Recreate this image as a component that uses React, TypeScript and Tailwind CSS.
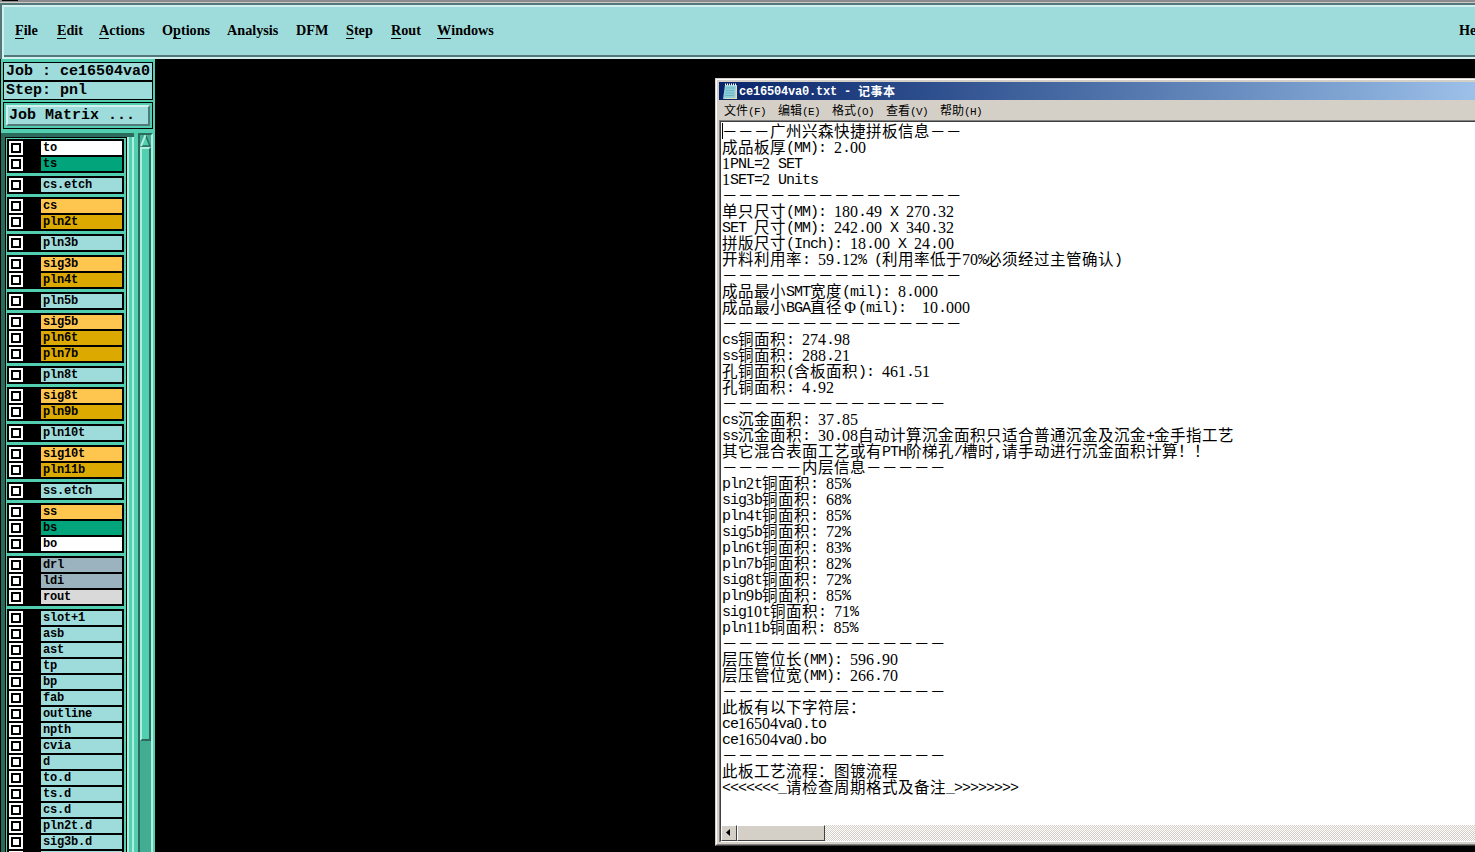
const menuItems = [
  { before: '', key: 'F', after: 'ile', width: 'w-[42px]' },
  { before: '', key: 'E', after: 'dit', width: 'w-[42px]' },
  { before: '', key: 'A', after: 'ctions', width: 'w-[63px]' },
  { before: 'O', key: 'p', after: 'tions', width: 'w-[65px]' },
  { before: 'Analysis', key: '', after: '', width: 'w-[69px]' },
  { before: 'DFM', key: '', after: '', width: 'w-[50px]' },
  { before: '', key: 'S', after: 'tep', width: 'w-[45px]' },
  { before: '', key: 'R', after: 'out', width: 'w-[46px]' },
  { before: '', key: 'W', after: 'indows', width: 'w-[70px]' },
];

const colors = {
  white: 'bg-white',
  green: 'bg-[#02a47c]',
  aqua: 'bg-[#9edcdc]',
  yellow: 'bg-[#ffc64f]',
  gold: 'bg-[#dba900]',
  slate: 'bg-[#9bb3bf]',
  gray: 'bg-[#d9d9d9]',
};

type Layer = [string, keyof typeof colors];

const layerGroups: Layer[][] = [
  [['to', 'white'], ['ts', 'green']],
  [['cs.etch', 'aqua']],
  [['cs', 'yellow'], ['pln2t', 'gold']],
  [['pln3b', 'aqua']],
  [['sig3b', 'yellow'], ['pln4t', 'gold']],
  [['pln5b', 'aqua']],
  [['sig5b', 'yellow'], ['pln6t', 'gold'], ['pln7b', 'gold']],
  [['pln8t', 'aqua']],
  [['sig8t', 'yellow'], ['pln9b', 'gold']],
  [['pln10t', 'aqua']],
  [['sig10t', 'yellow'], ['pln11b', 'gold']],
  [['ss.etch', 'aqua']],
  [['ss', 'yellow'], ['bs', 'green'], ['bo', 'white']],
  [['drl', 'slate'], ['ldi', 'slate'], ['rout', 'gray']],
  [
    ['slot+1', 'aqua'], ['asb', 'aqua'], ['ast', 'aqua'], ['tp', 'aqua'], ['bp', 'aqua'],
    ['fab', 'aqua'], ['outline', 'aqua'], ['npth', 'aqua'], ['cvia', 'aqua'], ['d', 'aqua'],
    ['to.d', 'aqua'], ['ts.d', 'aqua'], ['cs.d', 'aqua'], ['pln2t.d', 'aqua'], ['sig3b.d', 'aqua'],
    ['', 'aqua'],
  ],
];

const notepadMenu = [
  ['文件', '(F)'],
  ['编辑', '(E)'],
  ['格式', '(O)'],
  ['查看', '(V)'],
  ['帮助', '(H)'],
];

const rule15 = '－'.repeat(15);
const rule14 = '－'.repeat(14);

const lines = [
  '－－－广州兴森快捷拼板信息－－',
  '成品板厚(MM): 2.00',
  '1PNL=2 SET',
  '1SET=2 Units',
  rule15,
  '单只尺寸(MM): 180.49 X 270.32',
  'SET 尺寸(MM): 242.00 X 340.32',
  '拼版尺寸(Inch): 18.00 X 24.00',
  '开料利用率: 59.12% (利用率低于70%必须经过主管确认)',
  rule15,
  '成品最小SMT宽度(mil): 8.000',
  '成品最小BGA直径Φ(mil):  10.000',
  rule15,
  'cs铜面积: 274.98',
  'ss铜面积: 288.21',
  '孔铜面积(含板面积): 461.51',
  '孔铜面积: 4.92',
  rule14,
  'cs沉金面积: 37.85',
  'ss沉金面积: 30.08自动计算沉金面积只适合普通沉金及沉金+金手指工艺',
  '其它混合表面工艺或有PTH阶梯孔/槽时,请手动进行沉金面积计算！！',
  '－－－－－内层信息－－－－－',
  'pln2t铜面积: 85%',
  'sig3b铜面积: 68%',
  'pln4t铜面积: 85%',
  'sig5b铜面积: 72%',
  'pln6t铜面积: 83%',
  'pln7b铜面积: 82%',
  'sig8t铜面积: 72%',
  'pln9b铜面积: 85%',
  'sig10t铜面积: 71%',
  'pln11b铜面积: 85%',
  rule14,
  '层压管位长(MM): 596.90',
  '层压管位宽(MM): 266.70',
  rule14,
  '此板有以下字符层：',
  'ce16504va0.to',
  'ce16504va0.bo',
  rule14,
  '此板工艺流程：图镀流程',
  '<<<<<<<_请检查周期格式及备注_>>>>>>>>',
];

// Half-width characters take 8px, full-width ones 16px
const TextLine = ({ text }: { text: string }) => (
  <div className="h-4 flex whitespace-pre leading-4">
    {text.split(/([0-9]+|Φ|[\x20-\x2f\x3a-\x7e]+)/).filter(Boolean).map((part, i) => {
      if (/^[0-9]/.test(part)) {
        return <span key={i} className="font-['Liberation_Serif',serif] text-[16px] leading-[18px]">{part}</span>;
      }
      if (part === 'Φ') {
        return <span key={i} className="w-4 text-center font-['Liberation_Serif',serif] text-[16px] leading-[18px]">{part}</span>;
      }
      if (/^[\x20-\x7e]/.test(part)) {
        return <span key={i} className="font-['Liberation_Mono',monospace] text-[15px] leading-[19px] tracking-[-1.002px]">{part}</span>;
      }
      return <span key={i} className="leading-[15px] tracking-[0.5px]">{part}</span>;
    })}
  </div>
);

const MenuBar = () => (
  <div className="h-[59px] shrink-0 bg-[#52787a]">
    <div className="h-[2px] bg-[#8c8c90]">
      <div className="w-[16px] h-[1px] ml-[2px] bg-black"></div>
    </div>
    <div className="h-[1px] bg-[#cfc9c4]"></div>
    <div className="h-[2px] bg-[#52787a]"></div>
    <div className="h-[54px] ml-[2px] border-y-2 border-l-2 border-[#d3f0f0] bg-[#9edcdc]">
      <div className="h-[50px] flex border-b-2 border-[#52787a] pl-[11px] pt-[14px] font-['Liberation_Serif',serif] font-bold text-[14.2px] leading-[19px]">
        {menuItems.map(item => (
          <div key={item.before + item.key} className={`${item.width} shrink-0 whitespace-nowrap`}>
            {item.before}
            {item.key && <span className="inline-block h-[18px] border-b border-black">{item.key}</span>}
            {item.after}
          </div>
        ))}
        <div className="ml-auto w-[16px] overflow-hidden whitespace-nowrap">Help</div>
      </div>
    </div>
  </div>
);

const LayerPanel = () => (
  <div className="w-[155px] h-[793px] shrink-0 pl-[1px]">
    <div className="h-full flex flex-col bg-[#52ceb0] font-['Liberation_Mono',monospace] font-bold">
      <div className="h-[73px] shrink-0 pl-[2px] pt-[3px] text-[15px] leading-[18px] whitespace-pre">
        <div className="w-[150px] h-[19px] border border-black bg-[#9edcdc] pl-[2px]">Job : ce16504va0</div>
        <div className="w-[150px] h-[19px] border border-black bg-[#9edcdc] pl-[2px]">Step: pnl</div>
        <div className="w-[150px] h-[27px] mt-[2px] border border-black p-[2px]">
          <div className="h-[21px] bg-[#9edcdc] border-2 border-t-[#d3f0f0] border-l-[#d3f0f0] border-r-[#52787a] border-b-[#52787a] pl-[1px]">
            Job Matrix ...
          </div>
        </div>
      </div>
      <div className="flex flex-1 min-h-0 mt-[1px]">
        <div className="w-[133px] flex border-t-4 border-l-4 border-[#2b6b5c] overflow-hidden">
          <div className="w-[122px] border-x border-t border-black pt-[1px] pl-[1px] flex flex-col gap-[3px]">
            {layerGroups.map((group, i) => (
              <div key={i} className="w-[117px] shrink-0 bg-black p-[2px] flex flex-col gap-[2px]">
                {group.map(([name, color]) => (
                  <div key={name} className="h-[14px] flex">
                    <div className="w-[14px] h-[14px] bg-white p-[2px]">
                      <div className="w-[10px] h-[10px] border-2 border-black"></div>
                    </div>
                    <div className={`w-[81px] ml-[18px] pl-[2px] pt-px text-[12px] leading-[13px] tracking-[-0.2px] ${colors[color]}`}>{name}</div>
                  </div>
                ))}
              </div>
            ))}
          </div>
          <div className="w-[2px] bg-[#aeeedd]"></div>
          <div className="w-[3px]"></div>
          <div className="w-[2px] bg-[#aeeedd]"></div>
        </div>
        <div className="w-[15px] ml-[4px] border-t-2 border-l-2 border-r-2 border-t-[#2b6b5c] border-l-[#2b6b5c] border-r-[#aeeedd] bg-[#43ad94]">
          <svg width="11" height="12" viewBox="0 0 11 12">
            <path d="M5.5 0L1 11H10Z" fill="#52ceb0" />
            <path d="M5.5 0L10 11H1" stroke="#2b6b5c" strokeWidth="1.5" fill="none" />
            <path d="M5.5 0L1 11" stroke="#aeeedd" strokeWidth="2" />
          </svg>
          <div className="w-[11px] h-[594px] border-2 border-t-[#aeeedd] border-l-[#aeeedd] border-r-[#2b6b5c] border-b-[#2b6b5c] bg-[#52ceb0]"></div>
        </div>
      </div>
    </div>
  </div>
);

const Notepad = () => (
  <div className="w-[760px] h-[768px] mt-[19px] border-l border-y border-t-[#d4d0c8] border-l-[#d4d0c8] border-b-[#404040] bg-[#d4d0c8] overflow-hidden">
    <div className="h-[766px] border-l border-t border-b border-t-white border-l-white border-b-[#808080] pl-[2px] pt-[2px]">
      <div className="w-[800px] h-[18px] flex items-center bg-linear-to-r from-[#0a246a] to-[#a6caf0] pl-[3px] text-white font-bold whitespace-pre">
        <svg width="16" height="17" viewBox="0 0 16 17">
          <path d="M3 2H15L13 16H1Z" fill="#8fcfdc" />
          <path d="M14 2L15 3V16H3V15H13Z" fill="#e8dfb0" />
          <path d="M4 5H13M4 7.5H12M3 10H12M3 12.5H12" stroke="#5fa6b8" strokeWidth="0.7" />
          <path d="M3 1.5H15" stroke="#fff" strokeWidth="2" strokeDasharray="1 1" />
        </svg>
        <span className="ml-[1px] pt-px font-['Liberation_Mono',monospace] text-[12px] tracking-[-0.2px]">{'ce16504va0.txt - '}</span>
        <span className="font-['Noto_Sans_CJK_SC',sans-serif] text-[12px] tracking-[0.5px]">记事本</span>
      </div>
      <div className="h-[20px] flex pl-[5px] text-[12px] leading-5 whitespace-nowrap">
        {notepadMenu.map(([label, key]) => (
          <div key={label} className="w-[54px] font-['Noto_Sans_CJK_SC',sans-serif]">
            {label}
            <span className="font-['Liberation_Mono',monospace] text-[11px] tracking-[-0.6px]">{key}</span>
          </div>
        ))}
      </div>
      <div className="h-[722px] border-t border-l border-[#808080]">
        <div className="h-[721px] border-t border-l border-b border-t-[#404040] border-l-[#404040] border-b-white bg-white">
          <div className="relative h-[703px] pt-[1px] pl-px font-['Noto_Sans_CJK_SC',sans-serif] text-[15.5px] text-black">
            <div className="absolute left-px top-[1px] w-px h-4 bg-black"></div>
            {lines.map((line, i) => (
              <TextLine key={i} text={line} />
            ))}
          </div>
          <div className="h-4 flex bg-[repeating-conic-gradient(#d4d0c8_0_25%,#fff_0_50%)] bg-[length:2px_2px]">
            <div className="w-4 h-4 border border-t-white border-l-white border-r-[#404040] border-b-[#404040] bg-[#d4d0c8] pl-[4px] pt-[3px]">
              <svg width="4" height="7" viewBox="0 0 4 7">
                <path d="M4 0V7L0 3.5Z" fill="#000" />
              </svg>
            </div>
            <div className="w-[88px] h-4 border border-t-white border-l-white border-r-[#404040] border-b-[#404040] bg-[#d4d0c8]"></div>
          </div>
        </div>
      </div>
    </div>
  </div>
);

const App = () => {
  return (
    <div className="w-[1475px] h-[852px] overflow-hidden bg-black text-black">
      <MenuBar />
      <div className="flex justify-between">
        <LayerPanel />
        <Notepad />
      </div>
    </div>
  );
};

export default App;
